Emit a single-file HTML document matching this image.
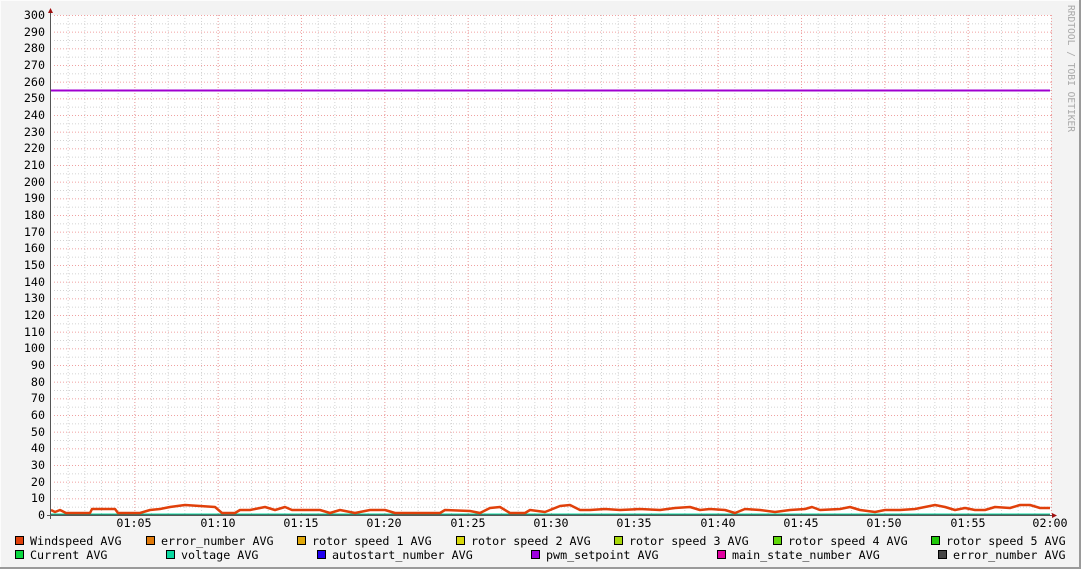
<!DOCTYPE html>
<html><head><meta charset="utf-8"><style>
html,body{margin:0;padding:0;background:#f3f3f3}
svg{display:block}
text{font-family:"DejaVu Sans Mono","Liberation Mono",monospace;font-size:11.7px;fill:#000}
</style></head><body>
<svg width="1081" height="569" viewBox="0 0 1081 569" xmlns="http://www.w3.org/2000/svg">
<defs>
<pattern id="hmin" patternUnits="userSpaceOnUse" x="51" y="6.667" width="1000" height="16.667"><line x1="0" y1="0.5" x2="1000" y2="0.5" stroke="#d4d4d4" stroke-dasharray="1,2"/></pattern>
<pattern id="hmaj" patternUnits="userSpaceOnUse" x="51" y="15" width="1000" height="16.667"><line x1="0" y1="0.5" x2="1000" y2="0.5" stroke="#f0a0a0" stroke-dasharray="1,2"/></pattern>
<pattern id="vmin" patternUnits="userSpaceOnUse" x="51" y="15" width="16.667" height="500"><line x1="0.5" y1="0" x2="0.5" y2="500" stroke="#d4d4d4" stroke-dasharray="1,2"/></pattern>
<pattern id="vmaj" patternUnits="userSpaceOnUse" x="51" y="15" width="83.333" height="500"><line x1="0.5" y1="0" x2="0.5" y2="500" stroke="#f0a0a0" stroke-dasharray="1,2"/></pattern>
</defs>
<rect x="0" y="0" width="1081" height="569" fill="#f3f3f3"/>
<rect x="0.5" y="0.5" width="1079" height="567" fill="none" stroke="#fcfcfc"/>
<line x1="0" y1="568" x2="1081" y2="568" stroke="#9a9a9a" stroke-width="2"/>
<line x1="1080" y1="0" x2="1080" y2="569" stroke="#9a9a9a" stroke-width="2"/>
<rect x="51" y="15" width="1000" height="500" fill="#fff"/>
<rect x="52" y="15" width="1000" height="500" fill="url(#hmin)"/>
<rect x="52" y="15" width="1000" height="500" fill="url(#vmin)"/>
<rect x="52" y="15" width="1000" height="500" fill="url(#hmaj)"/>
<rect x="52" y="15" width="1000" height="500" fill="url(#vmaj)"/>
<line x1="51" y1="90.5" x2="1050" y2="90.5" stroke="#a000d0" stroke-width="2"/>
<line x1="51" y1="515" x2="1050" y2="515" stroke="#444" stroke-width="1"/>
<line x1="51" y1="514" x2="1050" y2="514" stroke="#0ad8a0" stroke-width="1"/>
<polyline fill="none" stroke="#e0400a" stroke-width="2.5" stroke-linejoin="round" points="51,510 55,512 60,510 66,513 90,513 92,509 115,509 118,513 140,513 150,510 160,509 170,507 185,505 200,506 215,507 222,513 235,513 240,510 250,510 265,507 275,510 285,507 292,510 320,510 330,513 340,510 355,513 370,510 385,510 395,513 410,513 440,513 445,510 470,511 480,513 490,508 500,507 510,513 525,513 530,510 545,512 560,506 570,505 580,510 590,510 605,509 620,510 640,509 660,510 675,508 690,507 700,510 710,509 725,510 735,513 745,509 760,510 775,512 790,510 805,509 812,507 820,510 840,509 850,507 860,510 875,512 885,510 900,510 915,509 935,505 945,507 955,510 965,508 975,510 985,510 995,507 1010,508 1020,505 1030,505 1040,508 1050,508"/>
<line x1="50.5" y1="10" x2="50.5" y2="519" stroke="#555"/>
<line x1="47" y1="515.5" x2="1054" y2="515.5" stroke="#555"/>
<polygon points="48,13 53,13 50.5,8" fill="#a01010"/>
<polygon points="1052,513 1052,518 1057,515.5" fill="#a01010"/>
<g text-anchor="end">
<text x="45" y="19">300</text><text x="45" y="36">290</text><text x="45" y="52">280</text><text x="45" y="69">270</text><text x="45" y="86">260</text><text x="45" y="102">250</text><text x="45" y="119">240</text><text x="45" y="136">230</text><text x="45" y="152">220</text><text x="45" y="169">210</text><text x="45" y="186">200</text><text x="45" y="202">190</text><text x="45" y="219">180</text><text x="45" y="236">170</text><text x="45" y="252">160</text><text x="45" y="269">150</text><text x="45" y="286">140</text><text x="45" y="302">130</text><text x="45" y="319">120</text><text x="45" y="336">110</text><text x="45" y="352">100</text><text x="45" y="369">90</text><text x="45" y="386">80</text><text x="45" y="402">70</text><text x="45" y="419">60</text><text x="45" y="436">50</text><text x="45" y="452">40</text><text x="45" y="469">30</text><text x="45" y="486">20</text><text x="45" y="502">10</text><text x="45" y="519">0</text>
</g>
<g text-anchor="middle">
<text x="134" y="527">01:05</text><text x="218" y="527">01:10</text><text x="301" y="527">01:15</text><text x="384" y="527">01:20</text><text x="468" y="527">01:25</text><text x="551" y="527">01:30</text><text x="634" y="527">01:35</text><text x="718" y="527">01:40</text><text x="801" y="527">01:45</text><text x="884" y="527">01:50</text><text x="968" y="527">01:55</text><text x="1050" y="527">02:00</text>
</g>
<text transform="translate(1068,5) rotate(90)" style="font-size:9.6px;fill:#aaa">RRDTOOL / TOBI OETIKER</text>
<g stroke="#000" stroke-width="1">
<rect x="15.5" y="536.5" width="8" height="8" fill="#e0400a"/>
<rect x="146.5" y="536.5" width="8" height="8" fill="#e07a0a"/>
<rect x="297.5" y="536.5" width="8" height="8" fill="#e0a80a"/>
<rect x="456.5" y="536.5" width="8" height="8" fill="#d8d80a"/>
<rect x="614.5" y="536.5" width="8" height="8" fill="#a8d80a"/>
<rect x="773.5" y="536.5" width="8" height="8" fill="#60d80a"/>
<rect x="931.5" y="536.5" width="8" height="8" fill="#20c80a"/>
<rect x="15.5" y="550.5" width="8" height="8" fill="#0ad840"/>
<rect x="166.5" y="550.5" width="8" height="8" fill="#0ad8a0"/>
<rect x="317.5" y="550.5" width="8" height="8" fill="#2000f0"/>
<rect x="531.5" y="550.5" width="8" height="8" fill="#a000e0"/>
<rect x="717.5" y="550.5" width="8" height="8" fill="#e000a0"/>
<rect x="938.5" y="550.5" width="8" height="8" fill="#444"/>
</g>
<text x="30" y="545">Windspeed AVG</text>
<text x="161" y="545">error_number AVG</text>
<text x="312" y="545">rotor speed 1 AVG</text>
<text x="471" y="545">rotor speed 2 AVG</text>
<text x="629" y="545">rotor speed 3 AVG</text>
<text x="788" y="545">rotor speed 4 AVG</text>
<text x="946" y="545">rotor speed 5 AVG</text>
<text x="30" y="559">Current AVG</text>
<text x="181" y="559">voltage AVG</text>
<text x="332" y="559">autostart_number AVG</text>
<text x="546" y="559">pwm_setpoint AVG</text>
<text x="732" y="559">main_state_number AVG</text>
<text x="953" y="559">error_number AVG</text>
</svg>
</body></html>
